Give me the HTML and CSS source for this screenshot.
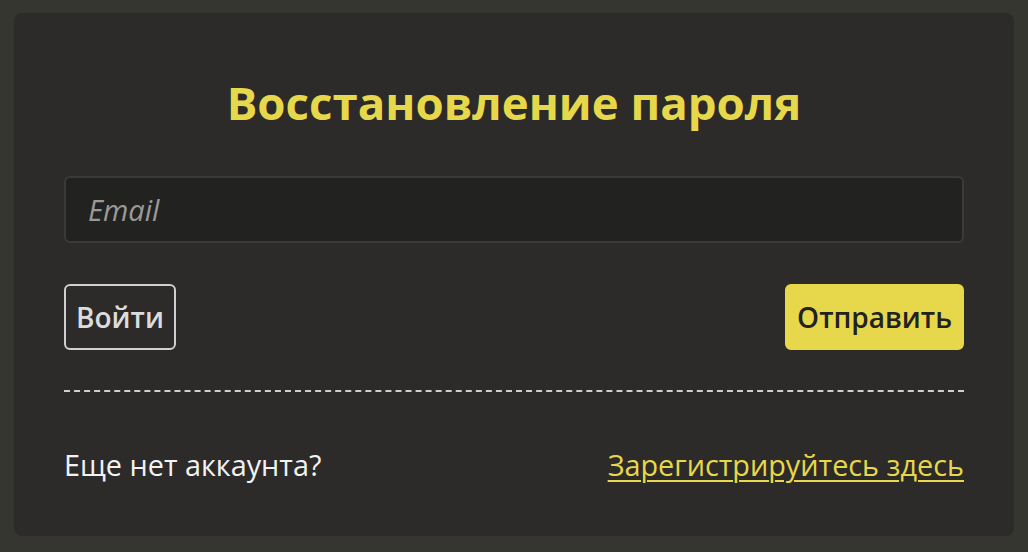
FILE: index.html
```html
<!DOCTYPE html>
<html lang="ru">
<head>
<meta charset="utf-8">
<title>Восстановление пароля</title>
<link rel="stylesheet" href="styles.css">
</head>
<body>
<main class="card">
  <h1 class="title">Восстановление пароля</h1>
  <form class="form">
    <input class="field" type="email" placeholder="Email">
    <div class="actions">
      <button type="button" class="btn btn-outline">Войти</button>
      <button type="button" class="btn btn-primary">Отправить</button>
    </div>
  </form>
  <div class="divider"></div>
  <div class="footer">
    <span class="note">Еще нет аккаунта?</span>
    <a class="link" href="#">Зарегистрируйтесь здесь</a>
  </div>
</main>
</body>
</html>
```
FILE: styles.css
```css
* { box-sizing: border-box; }
html, body { margin: 0; padding: 0; }
body {
  background: #363631;
  font-family: "Open Sans", "Noto Sans", sans-serif;
  padding: 13px 14px 16px;
  height: 552px;
}
.card {
  background: #2c2b29;
  border-radius: 8px;
  padding: 59px 50px 52px;
  height: 523px;
}
.title {
  margin: 0;
  text-align: center;
  color: #e6d84a;
  font-size: 45.6px;
  line-height: 60px;
  font-weight: 700;
}
.form { margin: 44px 0 0; }
.field {
  display: block;
  width: 100%;
  height: 67px;
  background: #222221;
  border: 2px solid #3a3a38;
  border-radius: 6px;
  padding: 0 22px;
  font-family: inherit;
  font-size: 29px;
  color: #ddd;
  outline: none;
}
.field::placeholder { color: #9a9a9a; font-style: italic; }
.actions {
  margin-top: 41px;
  display: flex;
  justify-content: space-between;
}
.btn {
  height: 66px;
  border-radius: 6px;
  font-family: inherit;
  font-size: 28px;
  font-weight: 600;
  padding: 0 10px;
  cursor: pointer;
}
.btn-outline {
  background: transparent;
  border: 2px solid #cfcfcf;
  color: #dcdcdc;
}
.btn-primary {
  background: #e6d84a;
  border: 2px solid #e6d84a;
  color: #222;
}
.divider {
  margin-top: 40px;
  height: 0;
  border-top: 2px dashed #cfcfcf;
}
.footer {
  margin-top: 54px;
  display: flex;
  justify-content: space-between;
  align-items: center;
  line-height: 38px;
  font-size: 28.8px;
}
.note { color: #f2f2f2; }
.link {
  color: #e6d84a;
  text-decoration: underline;
  text-decoration-thickness: 2px;
  text-underline-offset: 4px;
}
```
